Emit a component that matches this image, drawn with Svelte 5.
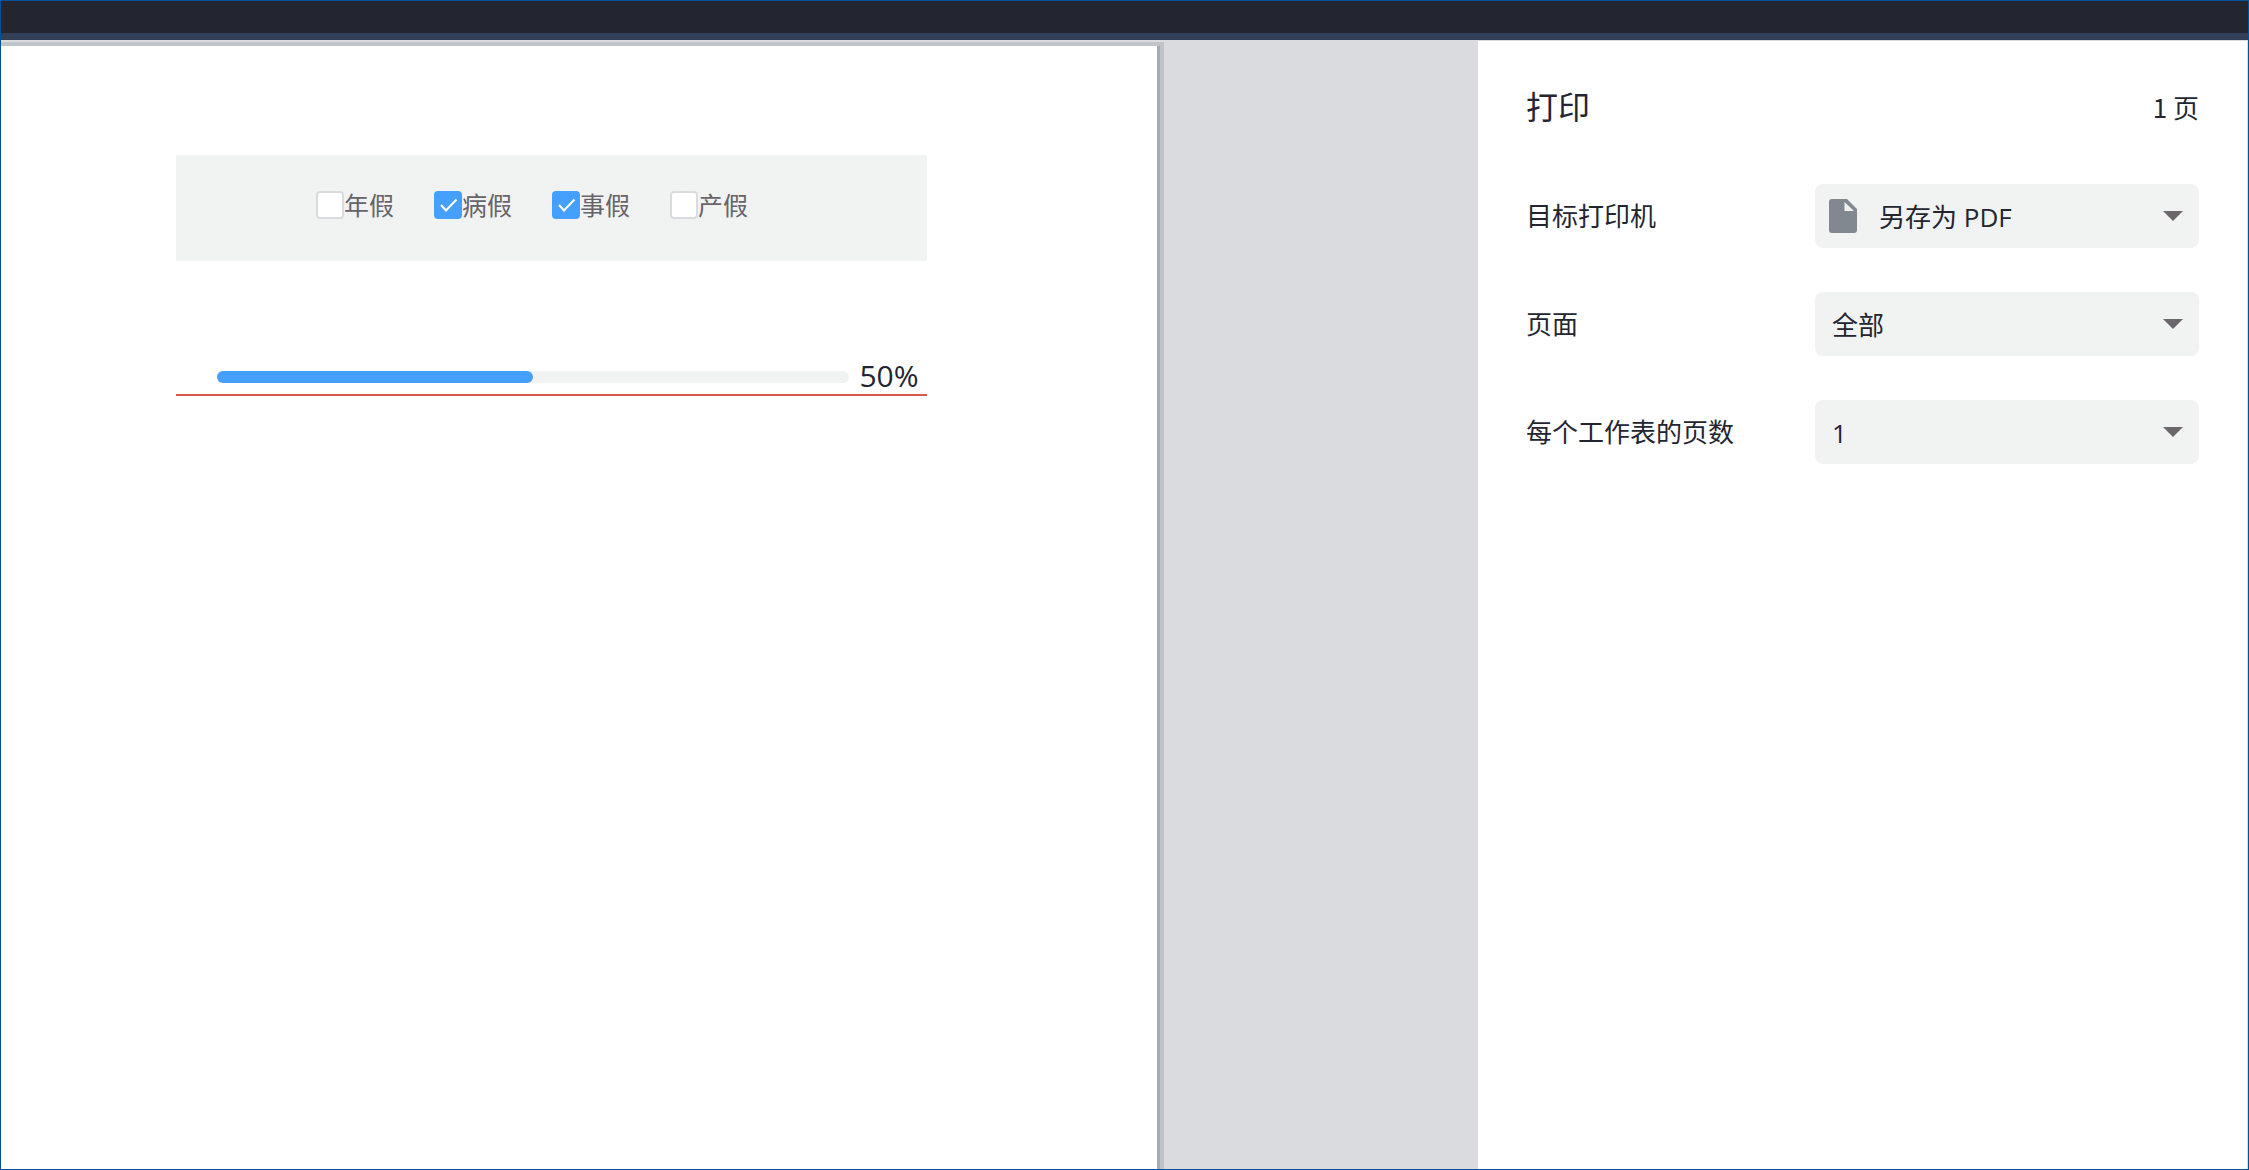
<script lang="ts">
	let leaves = $state([
		{ name: '年假', checked: false },
		{ name: '病假', checked: true },
		{ name: '事假', checked: true },
		{ name: '产假', checked: false }
	]);

	let progress = $state(50);

	const settings = [
		{ id: 'printer', label: '目标打印机', options: ['另存为 PDF'], file: true },
		{ id: 'pages', label: '页面', options: ['全部'], file: false },
		{ id: 'per-sheet', label: '每个工作表的页数', options: ['1'], file: false }
	];
</script>

<div class="window">
	<div class="titlebar"></div>
	<div class="body">
		<main class="preview">
			<div class="sheet">
				<div class="leaves">
					{#each leaves as leaf}
						<label class="leaf">
							<span class="box">
								<input type="checkbox" bind:checked={leaf.checked} />
								{#if leaf.checked}
									<svg viewBox="0 0 28 28" fill="none" stroke="#fff" stroke-width="2">
										<path d="M7 14l5 5.500L22.500 8.500" />
									</svg>
								{/if}
							</span>
							{leaf.name}
						</label>
					{/each}
				</div>

				<div class="progress">
					<div class="track">
						<div class="fill" style="width: {progress}%"></div>
					</div>
					<span class="percent">{progress}%</span>
				</div>
			</div>
		</main>

		<aside class="panel">
			<header>
				<h1>打印</h1>
				<span class="count">1 页</span>
			</header>

			{#each settings as setting}
				<div class="row">
					<label for={setting.id}>{setting.label}</label>
					<div class="select" class:file={setting.file}>
						<select id={setting.id}>
							{#each setting.options as option}
								<option>{option}</option>
							{/each}
						</select>
						{#if setting.file}
							<svg class="doc" viewBox="0 0 28 34">
								<path
									fill="#82888f"
									fill-rule="evenodd"
									d="M3 0h15l10 10v21a3 3 0 0 1-3 3H3a3 3 0 0 1-3-3V3a3 3 0 0 1 3-3zM15.500 3v9H25z"
								/>
							</svg>
						{/if}
						<svg class="caret" viewBox="0 0 20 10">
							<path fill="#6b676d" d="M0 0h20L10 10z" />
						</svg>
					</div>
				</div>
			{/each}
		</aside>
	</div>
</div>

<style>
	:global(body) {
		margin: 0;
	}

	.window {
		display: flex;
		flex-direction: column;
		box-sizing: border-box;
		min-height: 100vh;
		border: 1px solid #00529b;
		background-color: #fff;
		color: #232530;
		font-family: 'Open Sans', 'Noto Sans CJK SC', sans-serif;
		font-size: 26px;
		line-height: 36px;
	}

	.titlebar {
		height: 32px;
		background-color: #232530;
		border-bottom: 7px solid #324057;
	}

	.body {
		display: flex;
		flex: 1;
	}

	.preview {
		display: flex;
		flex: 1;
		padding-top: 6px;
		overflow: hidden;
		background-color: #dadbdf;
	}

	.sheet {
		box-sizing: border-box;
		width: 78.3%;
		padding: 109px 230px 0 175px;
		background-color: #fff;
		box-shadow: 3px 0 #a8abaf, 3px 0 0 4px #c0c4c8;
	}

	.leaves {
		display: flex;
		align-items: flex-start;
		gap: 40px;
		box-sizing: border-box;
		height: 106px;
		padding: 32px 140px;
		background-color: #f1f3f3;
		color: #66646a;
		font-size: 25px;
	}

	.leaf {
		display: flex;
		align-items: center;
		white-space: nowrap;
	}

	.box {
		position: relative;
		width: 28px;
		height: 28px;
	}

	.box input {
		display: block;
		box-sizing: border-box;
		width: 28px;
		height: 28px;
		margin: 0;
		appearance: none;
		background-color: #fff;
		border: 2px solid #dadbdf;
		border-radius: 4px;
	}

	.box input:checked {
		background-color: #459ffc;
		border-color: #459ffc;
	}

	.box svg {
		position: absolute;
		inset: 0;
		pointer-events: none;
	}

	.progress {
		display: flex;
		align-items: center;
		gap: 10px;
		margin-top: 97px;
		padding: 0 9px 0 41px;
		border-bottom: 2px solid #d9584c;
	}

	.track {
		flex: 1;
		height: 12px;
		margin-top: 2px;
		border-radius: 6px;
		background-color: #f1f3f3;
	}

	.fill {
		height: 100%;
		border-radius: 6px;
		background-color: #459ffc;
	}

	.percent {
		font-size: 30px;
	}

	.panel {
		box-sizing: border-box;
		width: 770px;
		padding: 48px;
		border-top: 1px solid #dadbdf;
		border-right: 1px solid #dadbdf;
	}

	header {
		display: flex;
		align-items: center;
		justify-content: space-between;
		margin-bottom: 59px;
	}

	h1 {
		margin: 0;
		font-size: 32px;
		font-weight: 400;
	}

	.count {
		font-family: 'Noto Sans CJK SC', sans-serif;
	}

	.row {
		display: flex;
		align-items: center;
		justify-content: space-between;
		margin-bottom: 44px;
	}

	.select {
		position: relative;
		width: 384px;
	}

	select {
		display: block;
		width: 100%;
		height: 64px;
		padding: 2px 48px 0 17px;
		appearance: none;
		background-color: #f1f3f3;
		border: 0;
		border-radius: 8px;
		color: inherit;
		font: inherit;
	}

	.file select {
		padding-left: 64px;
	}

	.doc {
		position: absolute;
		top: 15px;
		left: 14px;
		width: 28px;
		height: 34px;
		pointer-events: none;
	}

	.caret {
		position: absolute;
		top: 27px;
		right: 16px;
		width: 20px;
		height: 10px;
		pointer-events: none;
	}
</style>
